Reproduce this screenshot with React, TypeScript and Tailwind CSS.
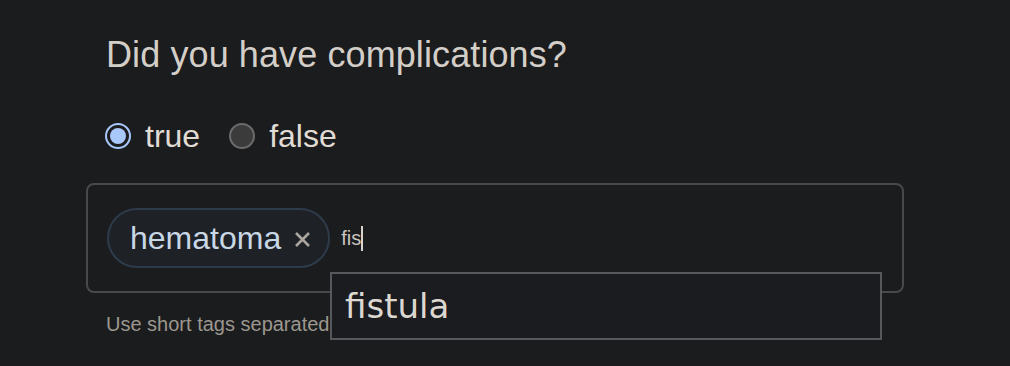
import { useState } from "react";

export default function App() {
  const [answer, setAnswer] = useState(true);
  const [tags] = useState<string[]>(["hematoma"]);

  return (
    <div className="min-h-[366px] w-full bg-[#1b1c1e] font-['Liberation_Sans',Arial,sans-serif]">
      <div className="w-[818px] ml-[86px] pt-[37px]">
        {/* Question */}
        <h2 className="px-[20px] text-[36px] leading-[36px] tracking-[0.1px] text-[#d3cfc8] font-normal">Did you have complications?</h2>

        {/* Radios */}
        <div className="px-[19px] mt-[47px] flex items-center h-[32px]">
          <label className="flex items-center cursor-pointer" onClick={() => setAnswer(true)}>
            <span className={`w-[26px] h-[26px] rounded-full flex items-center justify-center ${answer ? "border-2 border-[#a8c7fa] bg-[#1b1c1e]" : "border-2 border-[#6b6b6b] bg-[#3b3b3b]"}`}>
              {answer && <span className="w-[16px] h-[16px] rounded-full bg-[#a8c7fa]"></span>}
            </span>
            <span className="ml-[14px] text-[32px] leading-[32px] text-[#e0dcd5]">true</span>
          </label>
          <label className="flex items-center cursor-pointer ml-[29px]" onClick={() => setAnswer(false)}>
            <span className={`w-[26px] h-[26px] rounded-full flex items-center justify-center ${!answer ? "border-2 border-[#a8c7fa] bg-[#1b1c1e]" : "border-2 border-[#6b6b6b] bg-[#3b3b3b]"}`}>
              {!answer && <span className="w-[16px] h-[16px] rounded-full bg-[#a8c7fa]"></span>}
            </span>
            <span className="ml-[14px] text-[32px] leading-[32px] text-[#e0dcd5]">false</span>
          </label>
        </div>

        {/* Tag input */}
        <div className="relative mt-[31px] h-[110px] border-2 border-[#48494c] rounded-[8px] flex items-center px-[19px]">
          {tags.map((tag) => (
            <span key={tag} className="h-[60px] flex items-center rounded-full border-2 border-[#2e3b4b] bg-[#1e2125] pl-[21px] pr-[17px]">
              <span className="text-[32px] leading-none text-[#c8d7e6]">{tag}</span>
              <svg className="ml-[13px] mt-[3px]" width="17" height="17" viewBox="0 0 17 17">
                <path d="M2 2L15 15M15 2L2 15" stroke="#aaa59e" strokeWidth="2.6" strokeLinecap="butt" />
              </svg>
            </span>
          ))}
          <span className="ml-[11px] flex items-center">
            <span className="text-[20px] leading-none text-[#c9c5be]">fis</span>
            <span className="w-[2px] h-[25px] bg-[#d8d4cd]"></span>
          </span>

          {/* Autocomplete dropdown */}
          <div className="absolute left-[242px] top-[87px] w-[552px] h-[68px] border-2 border-[#56595c] bg-[#1b1c1f] flex items-center pl-[13px] z-10">
            <span className="text-[34px] leading-none text-[#dcd8d1] font-['DejaVu_Sans',Verdana,sans-serif]">fistula</span>
          </div>
        </div>

        {/* Help text (rest is hidden under the dropdown) */}
        <p className="px-[20px] mt-[21px] text-[20px] leading-[20px] text-[#9c978f]">Use short tags separated</p>
      </div>
    </div>
  );
}
